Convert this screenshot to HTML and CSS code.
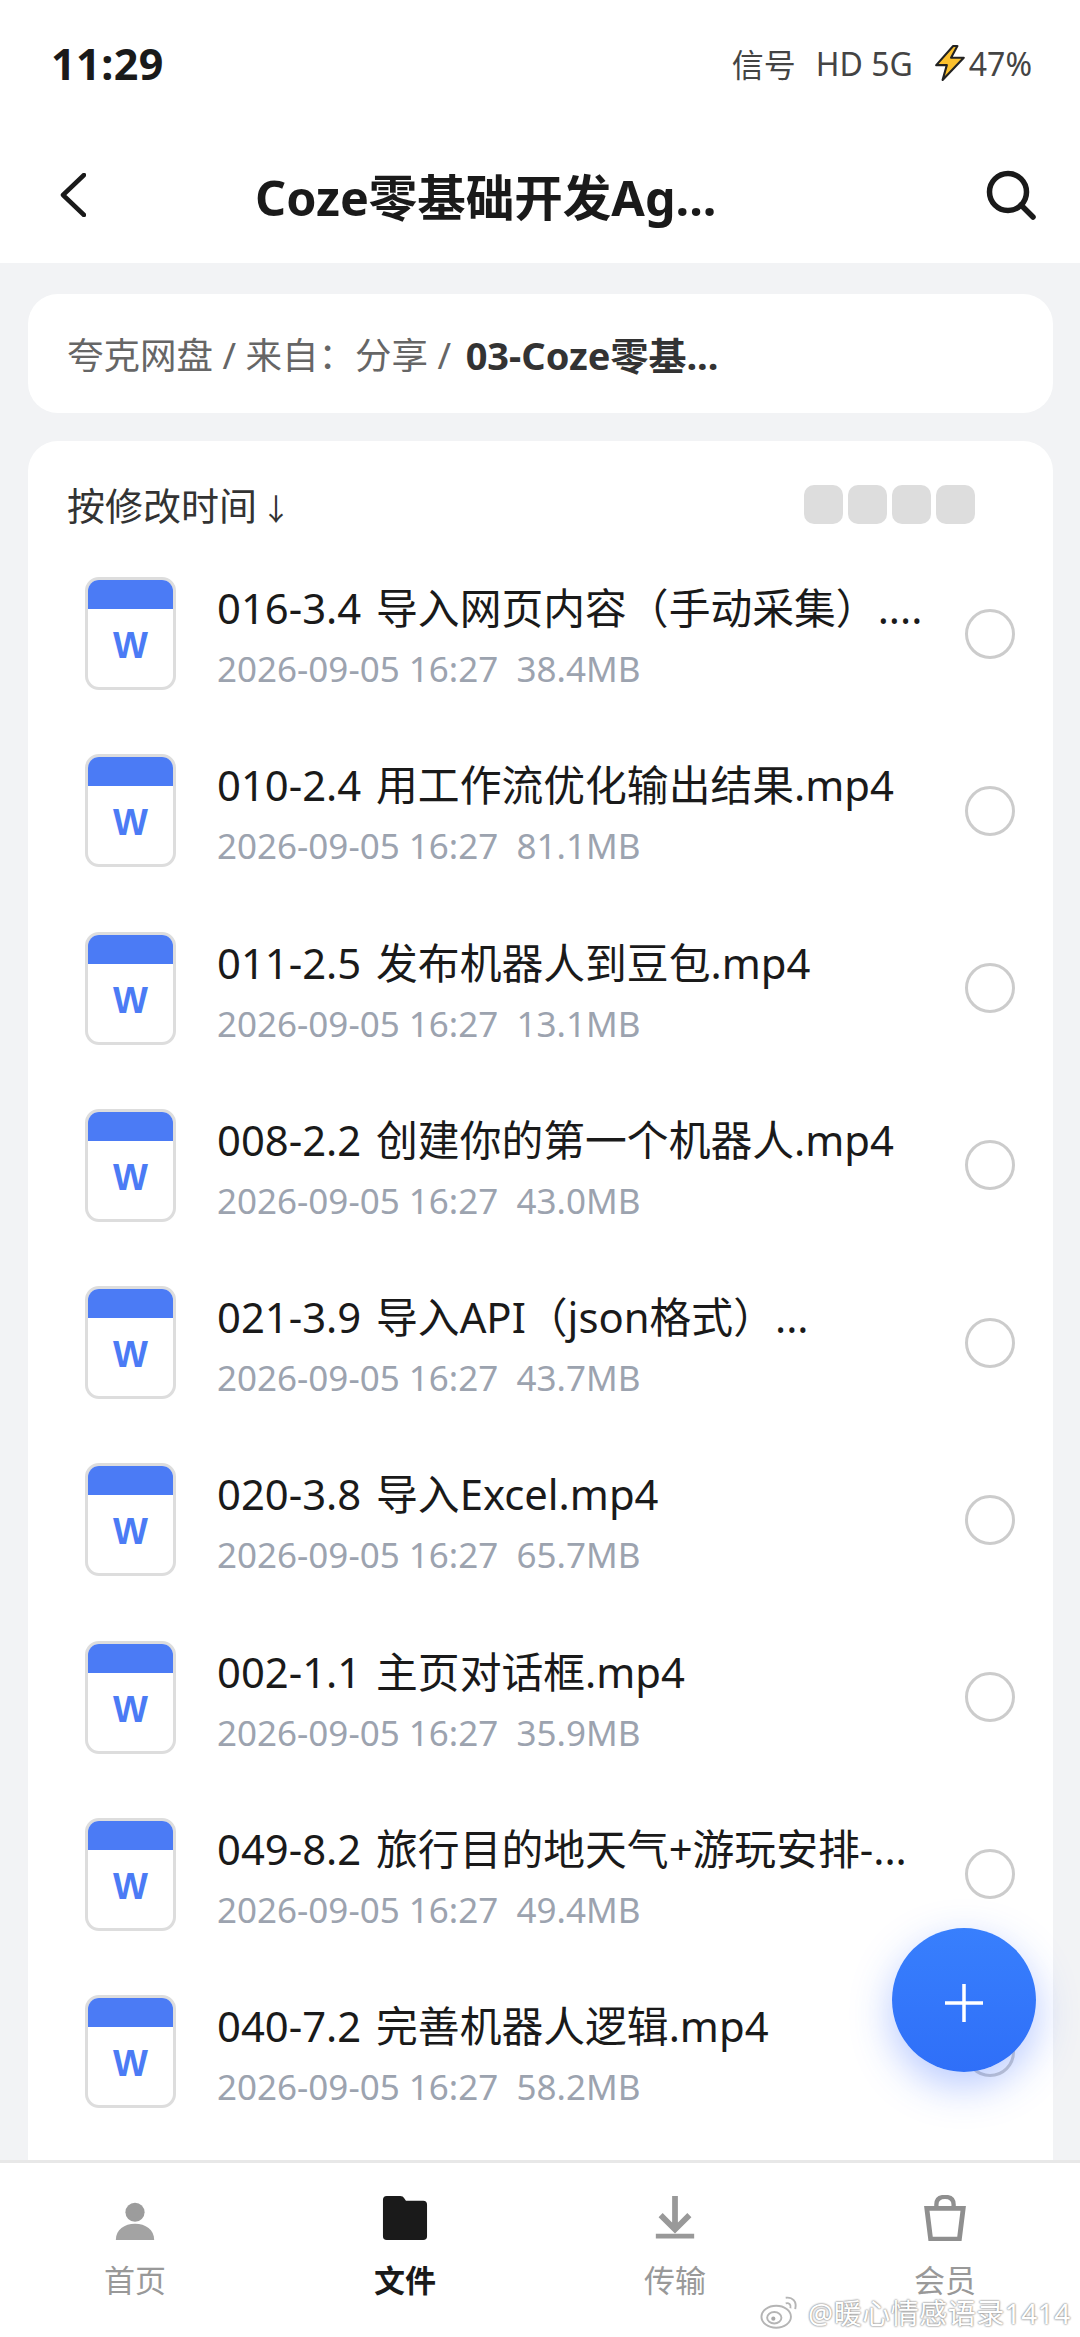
FILE: index.html
```html
<!DOCTYPE html>
<html lang="zh-CN">
<head>
    <meta charset="UTF-8">
    <meta name="viewport" content="width=device-width, initial-scale=1.0">
    <title>Coze零基础开发Agent</title>
    <link rel="stylesheet" href="styles.css">
</head>
<body>
    <header class="top">
        <div class="status">
            <span class="clock">11:29</span>
            <div class="status-right">
                <span>信号</span>
                <span class="net">HD 5G</span>
                <svg class="bolt" viewBox="0 0 32 34"><path d="M19 1 3 19h10L9 33l20-21H17l6-11z" fill="#fbc02d" stroke="#222" stroke-width="2" stroke-linejoin="round"/></svg>
                <span>47%</span>
            </div>
        </div>
        <div class="toolbar">
            <svg class="back" viewBox="0 0 26 44"><path d="M24 2 3 22l21 20" fill="none" stroke="#1a1a1a" stroke-width="4.5" stroke-linecap="round" stroke-linejoin="round"/></svg>
            <h1 class="title">Coze零基础开发Ag...</h1>
            <svg class="search" viewBox="0 0 50 50"><circle cx="22" cy="22" r="18.5" fill="none" stroke="#1a1a1a" stroke-width="5.5"/><path d="M35 35l12 12" stroke="#1a1a1a" stroke-width="5.5" stroke-linecap="round"/></svg>
        </div>
    </header>

    <main class="content">
        <div class="crumb">夸克网盘 / 来自：分享 / <b>03-Coze零基...</b></div>
        <section class="list">
            <div class="sort-row">
                <span class="sort">按修改时间 <small>↓</small></span>
                <div class="views"><i></i><i></i><i></i><i></i></div>
            </div>

            <div class="row">
                <div class="doc"><span>W</span></div>
                <div class="info"><div class="name">016-3.4 导入网页内容（手动采集）....</div><div class="meta">2026-09-05 16:27&nbsp; 38.4MB</div></div>
                <div class="radio"></div>
            </div>
            <div class="row">
                <div class="doc"><span>W</span></div>
                <div class="info"><div class="name">010-2.4 用工作流优化输出结果.mp4</div><div class="meta">2026-09-05 16:27&nbsp; 81.1MB</div></div>
                <div class="radio"></div>
            </div>
            <div class="row">
                <div class="doc"><span>W</span></div>
                <div class="info"><div class="name">011-2.5 发布机器人到豆包.mp4</div><div class="meta">2026-09-05 16:27&nbsp; 13.1MB</div></div>
                <div class="radio"></div>
            </div>
            <div class="row">
                <div class="doc"><span>W</span></div>
                <div class="info"><div class="name">008-2.2 创建你的第一个机器人.mp4</div><div class="meta">2026-09-05 16:27&nbsp; 43.0MB</div></div>
                <div class="radio"></div>
            </div>
            <div class="row">
                <div class="doc"><span>W</span></div>
                <div class="info"><div class="name">021-3.9 导入API（json格式）...</div><div class="meta">2026-09-05 16:27&nbsp; 43.7MB</div></div>
                <div class="radio"></div>
            </div>
            <div class="row">
                <div class="doc"><span>W</span></div>
                <div class="info"><div class="name">020-3.8 导入Excel.mp4</div><div class="meta">2026-09-05 16:27&nbsp; 65.7MB</div></div>
                <div class="radio"></div>
            </div>
            <div class="row">
                <div class="doc"><span>W</span></div>
                <div class="info"><div class="name">002-1.1 主页对话框.mp4</div><div class="meta">2026-09-05 16:27&nbsp; 35.9MB</div></div>
                <div class="radio"></div>
            </div>
            <div class="row">
                <div class="doc"><span>W</span></div>
                <div class="info"><div class="name">049-8.2 旅行目的地天气+游玩安排-...</div><div class="meta">2026-09-05 16:27&nbsp; 49.4MB</div></div>
                <div class="radio"></div>
            </div>
            <div class="row">
                <div class="doc"><span>W</span></div>
                <div class="info"><div class="name">040-7.2 完善机器人逻辑.mp4</div><div class="meta">2026-09-05 16:27&nbsp; 58.2MB</div></div>
                <div class="radio"></div>
            </div>
        </section>
    </main>

    <nav class="tabs">
        <div class="tab">
            <svg viewBox="0 0 48 48"><circle cx="24" cy="18" r="10" fill="#9c9c9c"/><path d="M4 47c0-11 9-17 20-17s20 6 20 17z" fill="#a3a3a3"/></svg>
            <span>首页</span>
        </div>
        <div class="tab active">
            <svg viewBox="0 0 48 48"><path d="M1 5q0-4 4-4h14q3 0 4 2l2 3h18q4 0 4 4v33q0 4-4 4H5q-4 0-4-4z" fill="#1a1a1a"/></svg>
            <span>文件</span>
        </div>
        <div class="tab">
            <svg viewBox="0 0 48 48"><path d="M24 1v34M9 21l15 15 15-15" fill="none" stroke="#999" stroke-width="6"/><path d="M4 43h40" stroke="#999" stroke-width="5"/></svg>
            <span>传输</span>
        </div>
        <div class="tab">
            <svg viewBox="0 0 48 48"><path d="M5 14h38l-4 32H9z" fill="none" stroke="#8f8f8f" stroke-width="5"/><path d="M15 14V10q0-8 9-8t9 8v4" fill="none" stroke="#8f8f8f" stroke-width="4.5"/></svg>
            <span>会员</span>
        </div>
    </nav>

    <!-- floating add button -->
    <div class="fab"><svg viewBox="0 0 38 38"><path d="M19 0v38M0 19h38" stroke="#fff" stroke-width="3.5"/></svg></div>

    <div class="watermark">
        <svg viewBox="0 0 42 36"><ellipse cx="17" cy="23" rx="15.5" ry="11.5" fill="#fff" stroke="#b5b5b5" stroke-width="2"/><ellipse cx="15" cy="24" rx="7.5" ry="6" fill="#fff" stroke="#b5b5b5" stroke-width="2"/><circle cx="14" cy="25" r="2.2" fill="#aaa"/><path d="M27 3c7-1 12 4 10 12M27 9c3-1 6 1 5 5" fill="none" stroke="#b5b5b5" stroke-width="2"/></svg>
        <span>@暖心情感语录1414</span>
    </div>
</body>
</html>
```

FILE: styles.css
```css
* { box-sizing: border-box; }
html, body { margin: 0; padding: 0; }
body { position: relative; width: 1080px; height: 2337px; overflow: hidden; display: flex; flex-direction: column; background: #f2f3f5; color: #1a1a1a; font-family: "Noto Sans", "Noto Sans CJK SC", sans-serif; }

.top { background: #fff; height: 263px; flex: none; }
.status { height: 126px; display: flex; justify-content: space-between; align-items: center; padding: 0 48px 0 51px; }
.clock { font-size: 43px; font-weight: 700; letter-spacing: 0.5px; color: #1a1a1a; }
.status-right { display: flex; align-items: center; font-size: 32px; color: #444; }
.net { margin-left: 20px; margin-right: 20px; }
.bolt { width: 34px; height: 36px; margin-right: 2px; }

.toolbar { height: 137px; display: flex; align-items: center; padding: 0 44px 0 60px; }
.back { width: 26px; height: 44px; }
.title { margin: 0 auto 0 169px; font-size: 48.5px; font-weight: 700; color: #1a1a1a; white-space: nowrap; }
.search { width: 50px; height: 50px; }

.content { flex: 1; min-height: 0; padding: 31px 27px 0 28px; overflow: hidden; }
.crumb { height: 119px; background: #fff; border-radius: 30px; padding-left: 39px; display: flex; align-items: center; white-space: pre-wrap; font-size: 36.5px; color: #666; }
.crumb b { color: #333; font-weight: 700; font-size: 38px; margin-left: 5px; }

.list { margin-top: 28px; background: #fff; border-radius: 30px 30px 0 0; height: 1800px; }
.sort-row { height: 104px; display: flex; justify-content: space-between; padding: 44px 78px 0 39px; }
.sort { font-size: 38px; line-height: 40px; color: #333; word-spacing: -6px; }
.sort small { font-size: 30px; }
.views { display: flex; gap: 5px; }
.views i { width: 39px; height: 39px; background: #ddd; border-radius: 10px; }

.row { height: 177.25px; display: flex; align-items: center; padding: 0 38px 0 57px; }
.doc { width: 91px; height: 113px; flex: none; border: 3px solid #ddd; border-radius: 14px; overflow: hidden; }
.doc::before { content: ""; display: block; height: 32px; margin: -3px -3px 0; background: #4b7bf5; }
.doc span { display: block; text-align: center; margin-top: 17px; font-family: "Liberation Sans", sans-serif; font-weight: 700; font-size: 37px; line-height: 40px; color: #4b7bf5; }
.info { flex: 1; min-width: 0; margin: 6px 0 0 41px; }
.name { font-size: 41.8px; line-height: 56px; margin-top: -3px; word-spacing: 4px; color: #1a1a1a; white-space: nowrap; }
.meta { margin-top: 12px; font-size: 35px; line-height: 42px; color: #9ca3af; white-space: nowrap; }
.radio { width: 50px; height: 50px; flex: none; border: 3px solid #ccc; border-radius: 50%; }

.tabs { height: 177px; flex: none; background: #fff; border-top: 3px solid #e8e8e8; display: grid; grid-template-columns: repeat(4, 1fr); }
.tab { display: flex; flex-direction: column; align-items: center; padding-top: 32px; font-size: 31px; line-height: 40px; color: #999; }
.tab svg { width: 46px; height: 46px; margin-bottom: 19px; }
.tab.active { color: #1a1a1a; font-weight: 700; }

.fab { position: absolute; left: 892px; top: 1928px; width: 144px; height: 144px; border-radius: 50%; background: linear-gradient(#387ffd, #2f6ff8); box-shadow: 0 14px 40px rgba(50, 100, 255, 0.35); display: flex; align-items: center; justify-content: center; }
.fab svg { width: 38px; height: 38px; margin-top: 6px; }

.watermark { position: absolute; left: 760px; top: 2292px; display: flex; align-items: center; gap: 8px; font-size: 28px; letter-spacing: 0.5px; color: #fff; text-shadow: 0 0 2px #888, 0 0 2px #888; }
.watermark svg { width: 40px; height: 36px; }
```
